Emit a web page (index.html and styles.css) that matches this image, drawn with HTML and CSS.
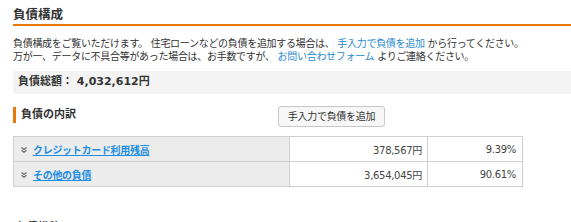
FILE: index.html
```html
<!DOCTYPE html>
<html lang="ja">
<head>
<meta charset="utf-8">
<link rel="stylesheet" href="styles.css">
</head>
<body>
<div class="page">
  <h1 class="title">負債構成</h1>
  <p class="intro">負債構成をご覧いただけます。 住宅ローンなどの負債を追加する場合は、 <a class="link" href="#">手入力で負債を追加</a> から行ってください。<br>万が一、データに不具合等があった場合は、お手数ですが、 <a class="link" href="#">お問い合わせフォーム</a> よりご連絡ください。</p>
  <div class="total">負債総額： 4,032,612円</div>
  <div class="section-head">
    <h2 class="subtitle">負債の内訳</h2>
    <button class="btn">手入力で負債を追加</button>
  </div>
  <table class="breakdown">
    <tr>
      <td class="name"><span class="chev"><svg width="6" height="6" viewBox="0 0 6 6"><path d="M0.5 0.5 L3 2.5 L5.5 0.5 M0.5 3.3 L3 5.3 L5.5 3.3" fill="none" stroke="#666" stroke-width="1.1"/></svg></span><a class="tlink" href="#">クレジットカード利用残高</a></td>
      <td class="amount">378,567円</td>
      <td class="pct">9.39%</td>
    </tr>
    <tr>
      <td class="name"><span class="chev"><svg width="6" height="6" viewBox="0 0 6 6"><path d="M0.5 0.5 L3 2.5 L5.5 0.5 M0.5 3.3 L3 5.3 L5.5 3.3" fill="none" stroke="#666" stroke-width="1.1"/></svg></span><a class="tlink" href="#">その他の負債</a></td>
      <td class="amount">3,654,045円</td>
      <td class="pct">90.61%</td>
    </tr>
  </table>
  <h2 class="next">負債推移</h2>
</div>
</body>
</html>
```
FILE: styles.css
```css
html, body {
  margin: 0;
  padding: 0;
  overflow: hidden;
  background: #fff;
}
body {
  font-family: "DejaVu Sans", "Noto Sans CJK JP", sans-serif;
  color: #333;
}
.page {
  width: 620px;
  padding: 6px 0 0 13px;
}
.title {
  margin: 0;
  font-size: 12.5px;
  line-height: 18px;
  font-weight: bold;
  padding-bottom: 0;
  border-bottom: 2px solid #e8780a;
}
.intro {
  margin: 11px 0 0;
  font-size: 10px;
  letter-spacing: -0.3px;
  line-height: 13px;
}
.link {
  color: #2a8ad0;
  text-decoration: none;
}
.total {
  margin-top: 8px;
  background: #f3f3f3;
  height: 23px;
  line-height: 22px;
  padding-left: 5px;
  font-size: 11px;
  font-weight: bold;
  border-radius: 2px 0 0 2px;
}
.section-head {
  display: flex;
  align-items: flex-start;
  margin-top: 12px;
  width: 510px;
}
.subtitle {
  margin: 1px 0 0;
  font-size: 11px;
  line-height: 16px;
  font-weight: bold;
  border-left: 3px solid #e8780a;
  padding-left: 5px;
  width: 257px;
}
.btn {
  margin: 0;
  font-family: inherit;
  font-size: 10px;
  letter-spacing: -0.3px;
  color: #333;
  background: #f7f7f7;
  border: 1px solid #c8c8c8;
  border-radius: 3px;
  height: 21px;
  width: 107px;
  padding: 0;
  line-height: 19px;
}
.breakdown {
  margin-top: 9px;
  border-collapse: collapse;
  width: 510px;
  font-size: 10px;
  letter-spacing: -0.3px;
}
.breakdown td {
  border: 1px solid #cfcfcf;
  height: 24px;
  padding: 0;
}
.name {
  width: 268px;
  background: #ececec;
  padding-left: 7px !important;
}
.chev {
  display: inline-block;
  width: 12px;
  vertical-align: 1px;
}
.chev svg {
  display: block;
}
.tlink {
  color: #1e8ee0;
  font-weight: bold;
  text-decoration: underline;
}
.amount {
  width: 132px;
  text-align: right;
  padding-right: 5px !important;
  color: #444;
}
.pct {
  text-align: right;
  padding-right: 6px !important;
  color: #444;
}
.next {
  margin: 33px 0 0 3px;
  font-size: 11px;
  line-height: 16px;
  font-weight: bold;
}
```
